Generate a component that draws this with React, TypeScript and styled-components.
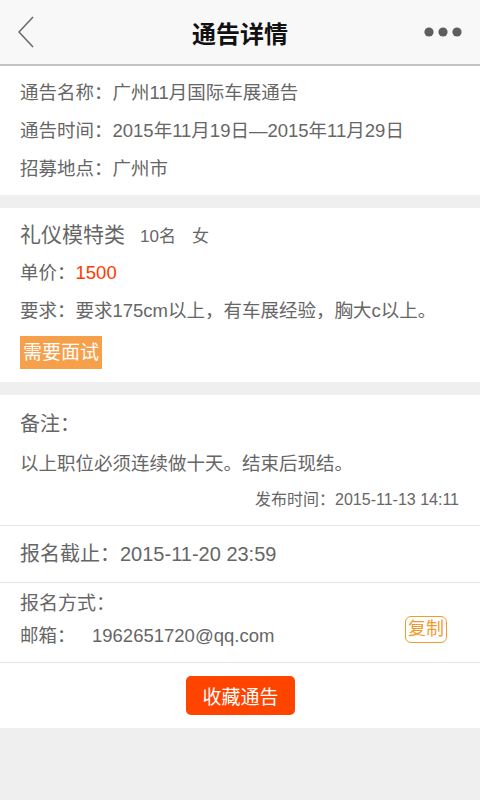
import styled, { createGlobalStyle } from "styled-components";

const GlobalStyle = createGlobalStyle`
  html, body {
    margin: 0;
    padding: 0;
    background: #efefef;
  }
  body {
    font-family: "Liberation Sans", "Noto Sans CJK SC", sans-serif;
    color: #666;
  }
`;

const Page = styled.div`
  width: 480px;
  min-height: 800px;
  background: #efefef;
`;

const Header = styled.header`
  height: 64px;
  background: #f8f8f8;
  border-bottom: 2px solid #c2c2c2;
  display: flex;
  align-items: center;
  justify-content: space-between;
  padding: 0 18px 0 18px;
  box-sizing: content-box;
  position: relative;
`;

const Title = styled.h1`
  position: absolute;
  left: 0;
  right: 0;
  margin: 0;
  text-align: center;
  font-size: 24px;
  font-weight: bold;
  color: #111;
  pointer-events: none;
`;

const IconButton = styled.div`
  display: flex;
  align-items: center;
  height: 64px;
`;

const Section = styled.section<{ $pad?: string }>`
  background: #fff;
  padding: ${(p) => p.$pad || "0 20px"};
  margin-bottom: 13px;
`;

const Row = styled.div<{ $size?: number; $lh?: number }>`
  font-size: ${(p) => p.$size || 18.5}px;
  line-height: ${(p) => p.$lh || 38}px;
  height: ${(p) => p.$lh || 38}px;
  color: #666;
  white-space: nowrap;
`;

const TitleRow = styled.div`
  display: flex;
  align-items: baseline;
  height: 38px;
  line-height: 38px;
  white-space: nowrap;
`;

const CategoryName = styled.span`
  font-size: 21px;
  color: #666;
  margin-right: 15px;
`;

const Small = styled.span<{ $gap?: number }>`
  font-size: 17px;
  color: #666;
  margin-right: ${(p) => p.$gap || 0}px;
`;

const Price = styled.span`
  color: #ff3a00;
`;

const Tag = styled.div`
  width: fit-content;
  margin-top: 6px;
  height: 33px;
  line-height: 33px;
  padding: 0 3px;
  background: #f6a04b;
  color: #fff;
  font-size: 19px;
`;

const Panel = styled.div`
  background: #fff;
`;

const Block = styled.div<{ $pad: string; $border?: boolean }>`
  padding: ${(p) => p.$pad};
  border-bottom: ${(p) => (p.$border ? "1px solid #e6e6e6" : "none")};
`;

const PublishTime = styled.div`
  text-align: right;
  font-size: 16px;
  line-height: 30px;
  height: 30px;
  color: #666;
`;

const ContactRow = styled.div`
  display: flex;
  align-items: flex-start;
  height: 32px;
  font-size: 18.5px;
  line-height: 32px;
  color: #666;
`;

const ContactLabel = styled.span`
  width: 72px;
`;

const ContactValue = styled.span`
  flex: 1;
`;

const CopyButton = styled.span`
  margin-top: -4px;
  margin-right: 13px;
  height: 25px;
  line-height: 25px;
  padding: 0 2px;
  border: 1.5px solid #f39a2c;
  border-radius: 6px;
  color: #f39a2c;
  font-size: 18px;
`;

const Footer = styled.div`
  display: flex;
  justify-content: center;
  padding: 13px 0 13px;
  background: #fff;
`;

const CollectButton = styled.button`
  width: 109px;
  height: 39px;
  border: none;
  border-radius: 5px;
  background: #ff4400;
  color: #fff;
  font-family: "Liberation Sans", "Noto Sans CJK SC", sans-serif;
  font-size: 19px;
  padding: 0;
  margin-left: 1px;
`;

function BackIcon() {
  return (
    <svg width="18" height="32" viewBox="0 0 18 32">
      <polyline points="15,1 1,16 15,31" fill="none" stroke="#6a6a6a" strokeWidth="1.6" />
    </svg>
  );
}

function MoreIcon() {
  return (
    <svg width="38" height="10" viewBox="0 0 38 10">
      <circle cx="5" cy="5" r="4.6" fill="#5e5e5e" />
      <circle cx="19" cy="5" r="4.6" fill="#5e5e5e" />
      <circle cx="33" cy="5" r="4.6" fill="#5e5e5e" />
    </svg>
  );
}

export default function App() {
  return (
    <Page>
      <GlobalStyle />
      <Header>
        <IconButton>
          <BackIcon />
        </IconButton>
        <Title>通告详情</Title>
        <IconButton>
          <MoreIcon />
        </IconButton>
      </Header>

      <Section $pad="8px 20px 7px">
        <Row>通告名称：广州11月国际车展通告</Row>
        <Row>通告时间：2015年11月19日—2015年11月29日</Row>
        <Row>招募地点：广州市</Row>
      </Section>

      <Section $pad="8px 20px 13px">
        <TitleRow>
          <CategoryName>礼仪模特类</CategoryName>
          <Small $gap={16}>10名</Small>
          <Small>女</Small>
        </TitleRow>
        <Row>
          单价：<Price>1500</Price>
        </Row>
        <Row>要求：要求175cm以上，有车展经验，胸大c以上。</Row>
        <Tag>需要面试</Tag>
      </Section>

      <Panel>
        <Block $pad="10px 21px 10px 20px" $border>
          <Row $size={20}>备注：</Row>
          <Row $lh={42}>以上职位必须连续做十天。结束后现结。</Row>
          <PublishTime>发布时间：2015-11-13 14:11</PublishTime>
        </Block>
        <Block $pad="0 20px" $border>
          <Row $size={20} $lh={56}>报名截止：2015-11-20 23:59</Row>
        </Block>
        <Block $pad="5px 20px 10px" $border>
          <Row $size={19} $lh={32}>报名方式：</Row>
          <ContactRow>
            <ContactLabel>邮箱：</ContactLabel>
            <ContactValue>1962651720@qq.com</ContactValue>
            <CopyButton>复制</CopyButton>
          </ContactRow>
        </Block>
        <Footer>
          <CollectButton>收藏通告</CollectButton>
        </Footer>
      </Panel>
    </Page>
  );
}
